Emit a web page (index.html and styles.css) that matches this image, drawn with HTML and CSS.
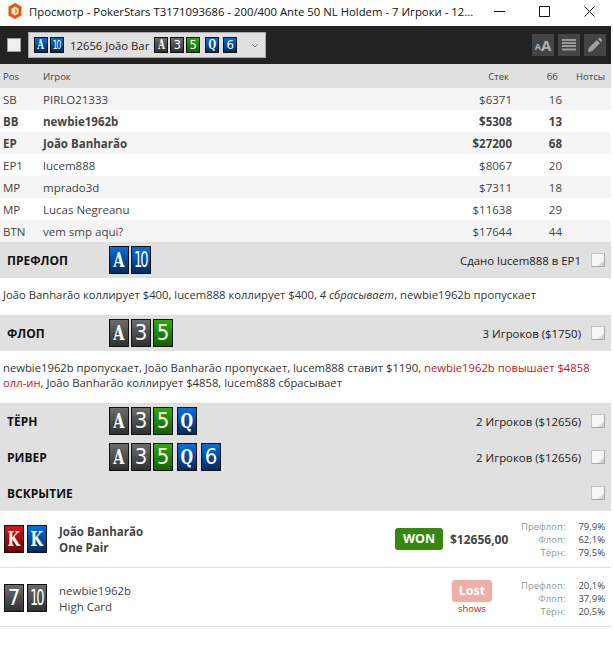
FILE: index.html
```html
<!DOCTYPE html>
<html lang="en">
<head>
    <meta charset="UTF-8">
    <title>Просмотр</title>
    <link rel="stylesheet" href="styles.css">
</head>
<body>
    <div class="titlebar">
        <svg class="app-icon" width="16" height="16" viewBox="0 0 16 16">
            <path d="M8 0 14.500 3.500v9L8 16 1.500 12.500v-9z" fill="#dc5a12"/>
            <path d="M8 3.500 11.500 5.500v5L8 12.500 4.500 10.500v-5z" fill="#fbe3c8"/>
            <path d="M8 5.500 10 7v2.500L8 10.500z" fill="#e8913c"/>
        </svg>
        <div class="title-text">Просмотр - PokerStars T3171093686 - 200/400 Ante 50 NL Holdem - 7 Игроки - 12...</div>
        <div class="win-buttons">
            <svg width="11" height="11" viewBox="0 0 11 11"><path d="M0 5.500h11" stroke="#111" fill="none"/></svg>
            <svg width="11" height="11" viewBox="0 0 11 11"><path d="M.5.500h10v10H.5z" stroke="#111" fill="none"/></svg>
            <svg width="11" height="11" viewBox="0 0 11 11"><path d="M.5.500l10 10M10.500.500l-10 10" stroke="#111" fill="none"/></svg>
        </div>
    </div>

    <div class="toolbar">
        <div class="tool-check"></div>
        <div class="hand-select">
            <span class="card small blue"><i>A</i></span><span class="card small blue"><i class="num ten">10</i></span>
            <span class="hand-label">12656 João Bar</span>
            <span class="card small gray"><i>A</i></span><span class="card small gray"><i class="num">3</i></span><span class="card small green"><i class="num">5</i></span><span class="card small blue wide"><i>Q</i></span><span class="card small blue wide"><i class="num">6</i></span>
            <svg class="chevron" width="8" height="5" viewBox="0 0 8 5"><path d="M1 1l3 3 3-3" stroke="#777" fill="none"/></svg>
        </div>
        <div class="tool-buttons">
            <div class="tool-btn"><span class="aa-small">A</span><span class="aa-big">A</span></div>
            <div class="tool-btn">
                <svg width="14" height="12" viewBox="0 0 14 12"><path d="M0 1h14M0 4h14M0 7h14M0 10.500h14" stroke="#9a9a9a" stroke-width="2" fill="none"/></svg>
            </div>
            <div class="tool-btn">
                <svg width="16" height="16" viewBox="0 0 16 16"><path d="M1 15l.8-4 8-8 3.200 3.200-8 8zM11 2l1-1a1 1 0 0 1 1.400 0l1.600 1.600a1 1 0 0 1 0 1.400l-1 1z" fill="#a0a0a0"/></svg>
            </div>
        </div>
    </div>

    <table class="players">
        <tr class="head"><td class="c-pos">Pos</td><td class="c-name">Игрок</td><td class="c-stack">Стек</td><td class="c-bb">бб</td><td class="c-notes">Нотсы</td></tr>
        <tr><td>SB</td><td>PIRLO21333</td><td class="c-stack">$6371</td><td class="c-bb">16</td><td></td></tr>
        <tr class="hero"><td>BB</td><td>newbie1962b</td><td class="c-stack">$5308</td><td class="c-bb">13</td><td></td></tr>
        <tr class="hero"><td>EP</td><td>João Banharão</td><td class="c-stack">$27200</td><td class="c-bb">68</td><td></td></tr>
        <tr><td>EP1</td><td>lucem888</td><td class="c-stack">$8067</td><td class="c-bb">20</td><td></td></tr>
        <tr><td>MP</td><td>mprado3d</td><td class="c-stack">$7311</td><td class="c-bb">18</td><td></td></tr>
        <tr><td>MP</td><td>Lucas Negreanu</td><td class="c-stack">$11638</td><td class="c-bb">29</td><td></td></tr>
        <tr><td>BTN</td><td>vem smp aqui?</td><td class="c-stack">$17644</td><td class="c-bb">44</td><td></td></tr>
    </table>

    <div class="street">
        <div class="street-name">ПРЕФЛОП</div>
        <div class="street-cards"><span class="card blue"><i>A</i></span><span class="card blue"><i class="num ten">10</i></span></div>
        <div class="street-info">Сдано lucem888 в EP1</div>
        <div class="note"></div>
    </div>
    <p class="actions one">João Banharão коллирует $400, lucem888 коллирует $400, <em>4 сбрасывает</em>, newbie1962b пропускает</p>

    <div class="street">
        <div class="street-name">ФЛОП</div>
        <div class="street-cards"><span class="card gray"><i>A</i></span><span class="card gray"><i class="num">3</i></span><span class="card green"><i class="num">5</i></span></div>
        <div class="street-info">3 Игроков ($1750)</div>
        <div class="note"></div>
    </div>
    <p class="actions">newbie1962b пропускает, João Banharão пропускает, lucem888 ставит $1190, <span class="raise">newbie1962b повышает $4858<br>олл-ин</span>, João Banharão коллирует $4858, lucem888 сбрасывает</p>

    <div class="street">
        <div class="street-name">ТЁРН</div>
        <div class="street-cards"><span class="card gray"><i>A</i></span><span class="card gray"><i class="num">3</i></span><span class="card green"><i class="num">5</i></span><span class="card blue gap"><i>Q</i></span></div>
        <div class="street-info">2 Игроков ($12656)</div>
        <div class="note"></div>
    </div>
    <div class="street">
        <div class="street-name">РИВЕР</div>
        <div class="street-cards"><span class="card gray"><i>A</i></span><span class="card gray"><i class="num">3</i></span><span class="card green"><i class="num">5</i></span><span class="card blue gap"><i>Q</i></span><span class="card blue gap"><i class="num">6</i></span></div>
        <div class="street-info">2 Игроков ($12656)</div>
        <div class="note"></div>
    </div>
    <div class="street">
        <div class="street-name">ВСКРЫТИЕ</div>
        <div class="note"></div>
    </div>

    <div class="result winner">
        <div class="result-cards"><span class="card red"><i>K</i></span><span class="card blue"><i>K</i></span></div>
        <div class="result-hand">João Banharão<br>One Pair</div>
        <div class="result-badge">
            <span class="badge won">WON</span>
        </div>
        <div class="result-amount">$12656,00</div>
        <table class="equity">
            <tr><td>Префлоп:</td><td>79,9%</td></tr>
            <tr><td>Флоп:</td><td>62,1%</td></tr>
            <tr><td>Тёрн:</td><td>79,5%</td></tr>
        </table>
    </div>
    <div class="result loser">
        <div class="result-cards"><span class="card gray"><i class="num">7</i></span><span class="card gray"><i class="num ten">10</i></span></div>
        <div class="result-hand">newbie1962b<br>High Card</div>
        <div class="result-badge lost-col">
            <span class="badge lost">Lost</span>
            <span class="shows">shows</span>
        </div>
        <table class="equity">
            <tr><td>Префлоп:</td><td>20,1%</td></tr>
            <tr><td>Флоп:</td><td>37,9%</td></tr>
            <tr><td>Тёрн:</td><td>20,5%</td></tr>
        </table>
    </div>
</body>
</html>
```

FILE: styles.css
```css
html, body {
    margin: 0;
    padding: 0;
    background: #fff;
}
body {
    width: 611px;
    height: 655px;
    overflow: hidden;
    font-family: "Open Sans", sans-serif;
    font-size: 11px;
    color: #444;
}

/* window chrome */
.titlebar {
    height: 26px;
    box-sizing: border-box;
    padding: 0 0 4px 7px;
    display: flex;
    align-items: center;
    color: #111;
    font-size: 11.33px;
}
.app-icon {
    margin-right: 6px;
}
.title-text {
    width: 465px;
    white-space: nowrap;
}
.win-buttons {
    display: flex;
    gap: 34px;
}

/* toolbar */
.toolbar {
    height: 38px;
    background: #222;
    display: flex;
    align-items: center;
    padding-left: 7px;
}
.tool-check {
    width: 12px;
    height: 12px;
    background: #f0f0f0;
    border: 1px solid #999;
}
.hand-select {
    width: 231px;
    height: 24px;
    margin-left: 7px;
    padding-left: 5px;
    background: #e0e0e0;
    border: 1px solid #aaa;
    display: flex;
    align-items: center;
    color: #222;
}
.hand-label {
    margin: 0 5px 0 4px;
    white-space: nowrap;
    font-size: 11.3px;
}
.chevron {
    margin-left: 13px;
}
.tool-buttons {
    margin-left: auto;
    margin-right: 5px;
    display: flex;
    gap: 4px;
}
.tool-btn {
    width: 22px;
    height: 22px;
    background: #444;
    display: flex;
    align-items: center;
    justify-content: center;
    color: #b0b0b0;
    font-weight: 700;
}
.aa-small {
    font-size: 9px;
    margin-top: 3px;
}
.aa-big {
    font-size: 15px;
}

/* cards */
.card {
    width: 18px;
    height: 26px;
    border: 1px solid #111;
    display: inline-block;
    text-align: center;
    color: #fff;
    font-family: "DejaVu Serif", serif;
    font-weight: 700;
    font-size: 20px;
    line-height: 26px;
    overflow: hidden;
}
.card i {
    display: inline-block;
    font-style: normal;
    transform: scaleX(.72);
}
.card i.num {
    font-family: "DejaVu Sans", sans-serif;
    font-weight: 400;
    font-size: 22px;
    transform: scaleX(.9);
}
.card i.ten {
    font-size: 21px;
    letter-spacing: -3px;
    transform: translateX(-2px) scaleX(.62);
}
.card.small {
    width: 12px;
    height: 14px;
    margin-right: 2px;
    font-size: 12px;
    line-height: 14px;
}
.card.small i.num {
    font-size: 13px;
}
.card.small i.ten {
    font-size: 13px;
    letter-spacing: -2px;
    transform: translateX(-1px) scaleX(.62);
}
.card.small.wide {
    margin-left: 3px;
    margin-right: 1px;
}
.blue {
    background: linear-gradient(#0070e0, #002a5c);
}
.gray {
    background: linear-gradient(#6c6c6c, #303030);
}
.green {
    background: linear-gradient(#2eaa0a, #146000);
}
.red {
    background: linear-gradient(#d8151b, #6d0004);
}

/* players */
.players {
    width: 100%;
    border-collapse: collapse;
    table-layout: fixed;
    font-size: 11.5px;
}
.players td {
    height: 22px;
    padding: 0;
    box-sizing: border-box;
}
.players tr:nth-child(even) {
    background: #f5f5f5;
}
.players tr.head {
    background: #e0e0e0;
    font-size: 9.5px;
}
.players tr.head td {
    height: 24px;
}
.players tr.head .c-stack {
    padding-right: 3px;
}
.players tr.head .c-bb {
    padding-right: 4px;
}
.players tr td:first-child {
    padding-left: 3px;
}
.c-pos {
    width: 43px;
}
.c-stack {
    width: 67px;
    text-align: right;
}
.c-bb {
    width: 50px;
    text-align: right;
}
.c-notes {
    width: 49px;
    text-indent: 14px;
    white-space: nowrap;
}
.hero {
    font-weight: 700;
}

/* streets */
.street {
    height: 36px;
    background: #e0e0e0;
    display: flex;
    align-items: center;
    color: #222;
    font-size: 11.4px;
}
.street-name {
    width: 109px;
    padding-left: 7px;
    box-sizing: border-box;
    color: #111;
    font-size: 12px;
    font-weight: 700;
}
.street-cards {
    display: flex;
    gap: 2px;
}
.card.gap {
    margin-left: 2px;
}
.street-info {
    margin-left: auto;
}
.note {
    width: 12px;
    height: 12px;
    margin-right: 6px;
    margin-left: auto;
    background: linear-gradient(135deg, #f6f6f6 70%, #cfcfcf 85%);
    border: 1px solid #c4c4c4;
    border-right-color: #aaa;
    border-bottom-color: #aaa;
}
.street-info + .note {
    margin-left: 10px;
}
.actions {
    margin: 0;
    padding: 9px 3px;
    font-size: 11.27px;
    line-height: 15px;
    height: 34px;
    color: #333;
}
.actions.one {
    height: 19px;
}
.raise {
    color: #b71c1c;
}

/* showdown results */
.result {
    height: 56px;
    border-bottom: 1px solid #e0e0e0;
    display: flex;
    align-items: center;
    font-size: 11.5px;
}
.result.loser {
    padding-top: 2px;
}
.result-cards {
    display: flex;
    gap: 3px;
    margin-left: 4px;
    width: 55px;
}
.result-hand {
    padding-top: 2px;
    line-height: 16px;
}
.winner .result-hand {
    font-weight: 700;
}
.result-badge {
    margin-left: auto;
    display: flex;
    flex-direction: column;
    align-items: center;
}
.lost-col {
    margin-right: 16px;
}
.badge {
    width: 48px;
    height: 22px;
    line-height: 22px;
    border-radius: 3px;
    color: #fff;
    font-weight: 700;
    font-size: 12.5px;
    text-align: center;
}
.won {
    background: #36870f;
}
.lost {
    width: 40px;
    background: #efafa4;
}
.shows {
    color: #b71c1c;
    font-size: 9.5px;
    line-height: 14px;
}
.result-amount {
    width: 58px;
    margin-left: 7px;
    font-size: 12px;
    font-weight: 700;
    white-space: nowrap;
}
.equity {
    width: 84px;
    margin-left: 13px;
    margin-right: 6px;
    border-collapse: collapse;
    font-size: 9.5px;
    line-height: 13px;
    text-align: right;
}
.equity td {
    padding: 0;
}
.equity td:first-child {
    color: #999;
    width: 44px;
}
```
